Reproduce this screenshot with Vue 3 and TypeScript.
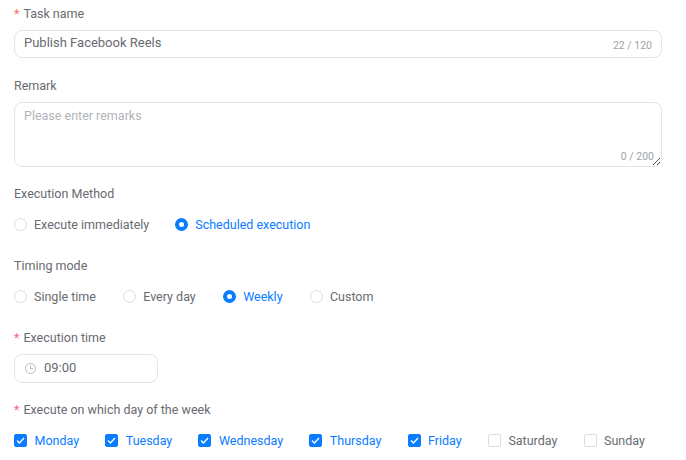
<script setup lang="ts">
const methods = [
  { label: 'Execute immediately', on: false },
  { label: 'Scheduled execution', on: true },
]
const modes = [
  { label: 'Single time', on: false },
  { label: 'Every day', on: false },
  { label: 'Weekly', on: true },
  { label: 'Custom', on: false },
]
const days = [
  { label: 'Monday', on: true },
  { label: 'Tuesday', on: true },
  { label: 'Wednesday', on: true },
  { label: 'Thursday', on: true },
  { label: 'Friday', on: true },
  { label: 'Saturday', on: false },
  { label: 'Sunday', on: false },
]
</script>

<template>
  <form class="form">
    <div class="item first">
      <label class="label"><span class="req">*</span>Task name</label>
      <div class="field single">
        <span class="value">Publish Facebook Reels</span>
        <span class="count">22 / 120</span>
      </div>
    </div>
    <div class="item">
      <label class="label">Remark</label>
      <div class="field area">
        <span class="placeholder">Please enter remarks</span>
        <span class="count area-count">0 / 200</span>
        <svg class="grip" width="9" height="9" viewBox="0 0 9 9">
          <path d="M1 8 8 1M5 8 8 5" stroke="#555" stroke-width="1" fill="none" />
        </svg>
      </div>
    </div>
    <div class="item radio-item">
      <label class="label">Execution Method</label>
      <div class="options radios method-group">
        <span v-for="m in methods" :key="m.label" class="option" :class="{ on: m.on }">
          <i class="radio" />{{ m.label }}
        </span>
      </div>
    </div>
    <div class="item radio-item">
      <label class="label">Timing mode</label>
      <div class="options radios">
        <span v-for="m in modes" :key="m.label" class="option" :class="{ on: m.on }">
          <i class="radio" />{{ m.label }}
        </span>
      </div>
    </div>
    <div class="item">
      <label class="label"><span class="req">*</span>Execution time</label>
      <div class="field time">
        <svg class="clock" width="11" height="11" viewBox="0 0 11 11">
          <circle cx="5.5" cy="5.5" r="5" stroke="#b4b6bc" fill="none" />
          <path d="M5.5 2.5v3.2h2.6" stroke="#b4b6bc" fill="none" />
        </svg>
        <span class="value">09:00</span>
      </div>
    </div>
    <div class="item">
      <label class="label"><span class="req">*</span>Execute on which day of the week</label>
      <div class="options checks">
        <span v-for="d in days" :key="d.label" class="option" :class="{ on: d.on }">
          <i class="check">
            <svg v-if="d.on" width="9" height="7" viewBox="0 0 9 7">
              <path d="M1 3.5 3.4 6 8 1" stroke="#fff" stroke-width="1.3" fill="none" />
            </svg>
          </i>{{ d.label }}
        </span>
      </div>
    </div>
  </form>
</template>

<style>
html, body { margin: 0; background: #fff; }
</style>

<style scoped>
.form {
  width: 686px;
  height: 460px;
  box-sizing: border-box;
  padding: 4px 24px 0 14px;
  font-family: Roboto, "Noto Sans", sans-serif;
  font-size: 12.5px;
  line-height: 20px;
  color: #696b71;
  overflow: hidden;
  display: flex;
  flex-direction: column;
  gap: 17px;
}
.item { display: flex; flex-direction: column; gap: 6px; }
.first { margin-bottom: 1px; }
.radio-item { gap: 7px; }
.label { display: block; height: 20px; }
.req { color: #f56c6c; margin-right: 4px; }
.field {
  box-sizing: border-box;
  border: 1px solid #e4e4ec;
  border-radius: 8px;
  position: relative;
  background: #fff;
}
.single { height: 28px; padding: 0 9px; display: flex; justify-content: space-between; align-items: center; }
.area { height: 65px; padding: 3px 9px; }
.value { color: #696b71; font-size: 13px; position: relative; top: -1px; }
.placeholder { color: #b1b3b8; }
.count { font-size: 10.5px; color: #a0a2a8; position: relative; top: 2px; }
.area-count { position: absolute; right: 7px; bottom: -1px; top: auto; }
.grip { position: absolute; right: 0; bottom: 0; }
.options { display: flex; align-items: center; height: 28px; }
.option { display: inline-flex; align-items: center; }
.option.on { color: #0a7cff; }
.radios { height: 27px; margin-bottom: 1px; gap: 27.33px; }
.method-group { gap: 26px; }
.radio {
  width: 13px;
  height: 13px;
  box-sizing: border-box;
  border: 1px solid #dcdce4;
  border-radius: 50%;
  margin-right: 7px;
  background: #fff;
}
.on .radio { border: 4.5px solid #0a7cff; }
.time { width: 144px; height: 29px; padding: 0 9px 0 10px; display: flex; align-items: center; gap: 8px; }
.clock { flex: none; }
.checks { height: 29px; gap: 26.15px; }
.check {
  width: 13px;
  height: 13px;
  box-sizing: border-box;
  border: 1px solid #dcdce4;
  border-radius: 2px;
  margin-right: 7.5px;
  display: flex;
  align-items: center;
  justify-content: center;
}
.on .check { background: #0a7cff; border-color: #0a7cff; }
</style>
